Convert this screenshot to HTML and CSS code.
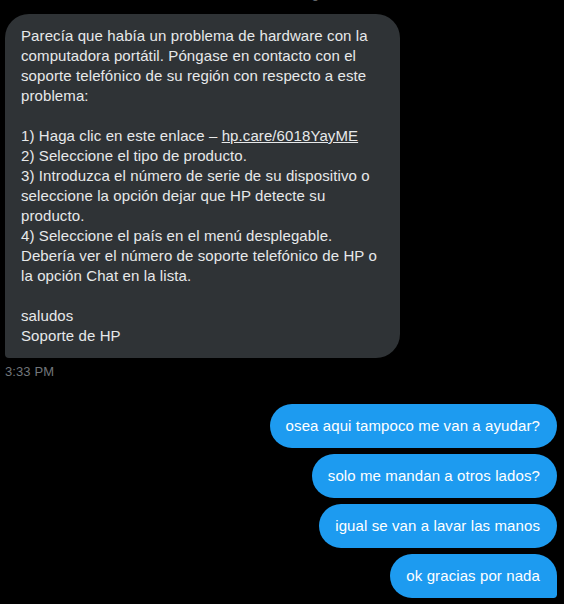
FILE: index.html
```html
<!DOCTYPE html>
<html lang="es">
<head>
<meta charset="utf-8">
<link rel="stylesheet" href="styles.css">
</head>
<body>
<div class="chat">
  <div class="prev">Sending</div>
  <div class="row received">
    <div class="bubble gray">Parecía que había un problema de hardware con la<br>computadora portátil. Póngase en contacto con el<br>soporte telefónico de su región con respecto a este<br>problema:<br><br>1) Haga clic en este enlace – <a class="link" href="#">hp.care/6018YayME</a><br>2) Seleccione el tipo de producto.<br>3) Introduzca el número de serie de su dispositivo o<br>seleccione la opción dejar que HP detecte su<br>producto.<br>4) Seleccione el país en el menú desplegable.<br>Debería ver el número de soporte telefónico de HP o<br>la opción Chat en la lista.<br><br>saludos<br>Soporte de HP</div>
  </div>
  <div class="time">3:33 PM</div>
  <div class="sent-group">
    <div class="bubble blue">osea aqui tampoco me van a ayudar?</div>
    <div class="bubble blue">solo me mandan a otros lados?</div>
    <div class="bubble blue">igual se van a lavar las manos</div>
    <div class="bubble blue last">ok gracias por nada</div>
  </div>
</div>
</body>
</html>
```

FILE: styles.css
```css
html, body {
  margin: 0;
  padding: 0;
  background: #000;
}
body {
  width: 564px;
  height: 604px;
  overflow: hidden;
  font-family: "Liberation Sans", Arial, sans-serif;
  font-size: 15px;
  line-height: 20px;
  letter-spacing: 0.1px;
  color: #e7e9ea;
}
.chat {
  display: flex;
  flex-direction: column;
  padding: 0 7px 0 5px;
}
.prev {
  height: 14px;
  margin-top: -14px;
  text-align: right;
  padding-right: 238px;
  color: #71767b;
  font-size: 13px;
  line-height: 16px;
}
.row.received {
  display: flex;
  margin-top: 14px;
}
.bubble {
  padding: 12px 16px;
  border-radius: 24px;
  box-sizing: border-box;
}
.gray {
  background: #2f3336;
  width: 395px;
  border-bottom-left-radius: 4px;
}
.link {
  color: #e7e9ea;
  text-decoration: underline;
}
.time {
  margin-top: 6px;
  color: #71767b;
  font-size: 13px;
  line-height: 16px;
  height: 16px;
}
.sent-group {
  display: flex;
  flex-direction: column;
  align-items: flex-end;
  gap: 6px;
  margin-top: 24px;
}
.blue {
  background: #1d9bf0;
  color: #fff;
  height: 44px;
  white-space: nowrap;
  padding-right: 17px;
}
.blue.last {
  border-bottom-right-radius: 4px;
}
```
